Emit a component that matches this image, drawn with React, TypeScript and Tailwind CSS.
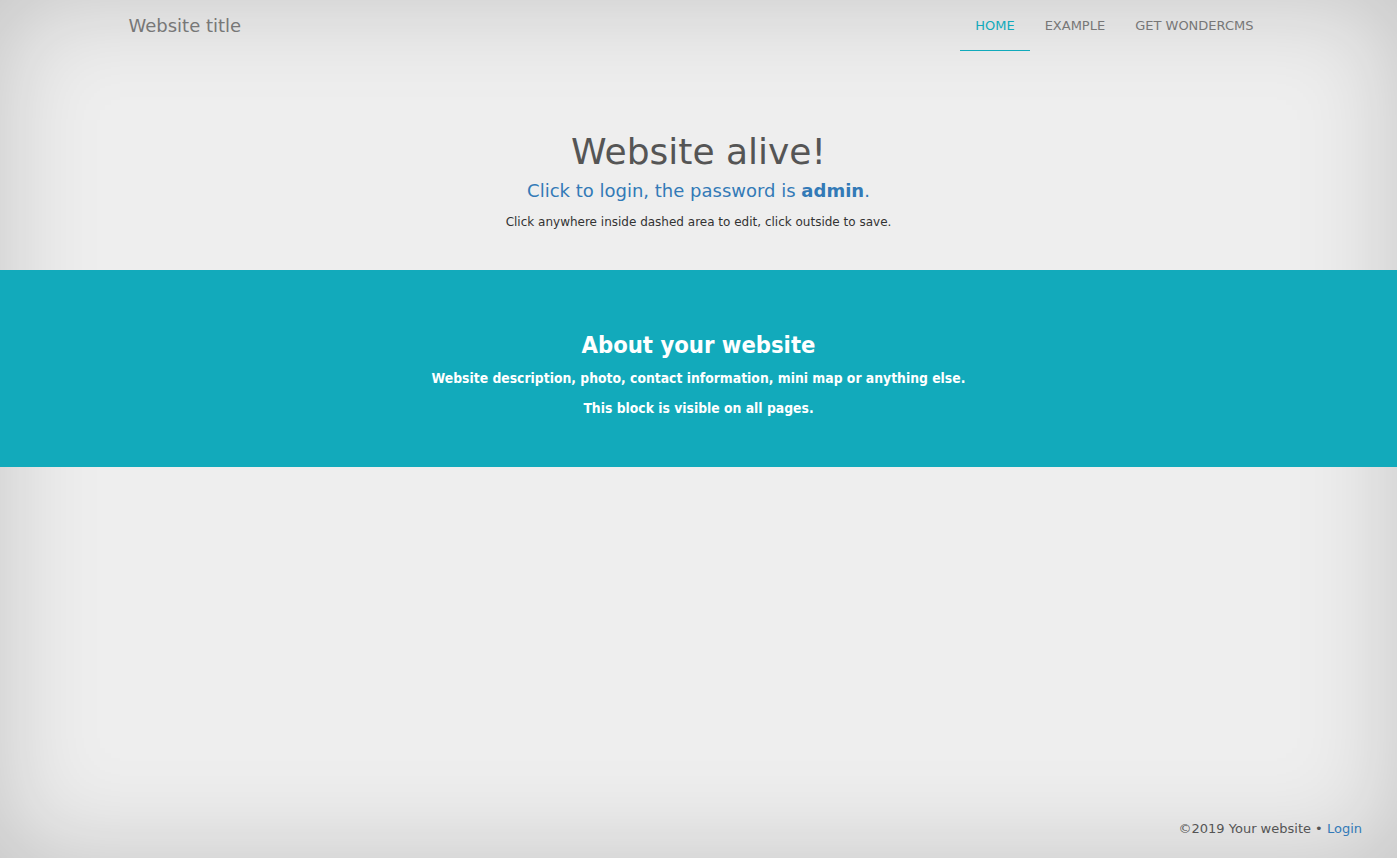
import React from "react";

const font = { fontFamily: '"DejaVu Sans", Verdana, sans-serif' };
const condensed = { fontFamily: '"DejaVu Sans Condensed", "DejaVu Sans", Tahoma, sans-serif' };

export default function App() {
  return (
    <div
      className="min-h-screen flex flex-col bg-[#eeeeee] shadow-[inset_0_0_100px_rgba(0,0,0,0.18)] text-[#555]"
      style={font}
    >
      <header className="w-[1170px] mx-auto px-[15px] flex justify-between items-start h-[51px]">
        <a className="text-[18px] text-[#777] leading-[52px] h-[50px]">Website title</a>
        <nav className="flex">
          <a className="px-[15px] h-[51px] leading-[51px] text-[13px] text-[#1ab] border-b border-[#1ab] uppercase">
            Home
          </a>
          <a className="px-[15px] h-[51px] leading-[51px] text-[13px] text-[#777] uppercase">Example</a>
          <a className="px-[15px] h-[51px] leading-[51px] text-[13px] text-[#777] uppercase">Get WonderCMS</a>
        </nav>
      </header>

      <section className="text-center pt-[77px] pb-[33px]">
        <h1 className="text-[36px] leading-[48px] text-[#555]">Website alive!</h1>
        <p className="text-[18px] leading-[30px] text-[#337ab7]">
          Click to login, the password is <b>admin</b>.
        </p>
        <p className="text-[12px] leading-[30px] text-[#333] mt-[1px]">
          Click anywhere inside dashed area to edit, click outside to save.
        </p>
      </section>

      <section className="bg-[#12aabb] text-white text-center pt-[60px] h-[197px]">
        <h2 className="text-[23.6px] leading-[30px] font-bold" style={condensed}>
          About your website
        </h2>
        <p className="text-[13.8px] font-bold leading-[30px] mt-[3px]" style={condensed}>
          Website description, photo, contact information, mini map or anything else.
        </p>
        <p className="text-[13.8px] font-bold leading-[30px]" style={condensed}>
          This block is visible on all pages.
        </p>
      </section>

      <div className="flex-1" />

      <footer className="text-right pr-[35px] pb-[19px] text-[13px] text-[#555] leading-[21px]">
        ©2019 Your website • <a className="text-[#337ab7]">Login</a>
      </footer>
    </div>
  );
}
